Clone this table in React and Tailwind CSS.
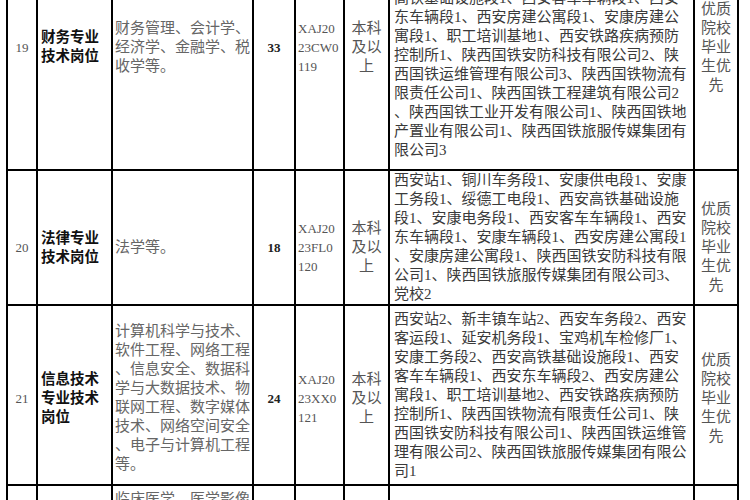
import React from 'react';

const rows = [
  {
    num: '19',
    h: 'h-[246px]',
    shift: '',
    name: ['财务专业', '技术岗位'],
    major: ['财务管理、会计学、', '经济学、金融学、税', '收学等。'],
    count: '33',
    code: ['XAJ20', '23CW0', '119'],
    units: [
      '高铁基础设施段1、西安客车车辆段1、西安',
      '东车辆段1、西安房建公寓段1、安康房建公',
      '寓段1、职工培训基地1、西安铁路疾病预防',
      '控制所1、陕西国铁安防科技有限公司2、陕',
      '西国铁运维管理有限公司3、陕西国铁物流有',
      '限责任公司1、陕西国铁工程建筑有限公司2',
      '、陕西国铁工业开发有限公司1、陕西国铁地',
      '产置业有限公司1、陕西国铁旅服传媒集团有',
      '限公司3',
    ],
    unitsBottom: true,
  },
  {
    num: '20',
    h: 'h-[135px]',
    shift: 'pt-[20px]',
    name: ['法律专业', '技术岗位'],
    major: ['法学等。'],
    count: '18',
    code: ['XAJ20', '23FL0', '120'],
    units: [
      '西安站1、铜川车务段1、安康供电段1、安康',
      '工务段1、绥德工电段1、西安高铁基础设施',
      '段1、安康电务段1、西安客车车辆段1、西安',
      '东车辆段1、安康车辆段1、西安房建公寓段1',
      '、安康房建公寓段1、陕西国铁安防科技有限',
      '公司1、陕西国铁旅服传媒集团有限公司3、',
      '党校2',
    ],
  },
  {
    num: '21',
    h: 'h-[180px]',
    shift: 'pt-[6px]',
    name: ['信息技术', '专业技术', '岗位'],
    major: [
      '计算机科学与技术、',
      '软件工程、网络工程',
      '、信息安全、数据科',
      '学与大数据技术、物',
      '联网工程、数字媒体',
      '技术、网络空间安全',
      '、电子与计算机工程',
      '等。',
    ],
    count: '24',
    code: ['XAJ20', '23XX0', '121'],
    units: [
      '西安站2、新丰镇车站2、西安车务段2、西安',
      '客运段1、延安机务段1、宝鸡机车检修厂1、',
      '安康工务段2、西安高铁基础设施段1、西安',
      '客车车辆段1、西安东车辆段2、西安房建公',
      '寓段1、职工培训基地2、西安铁路疾病预防',
      '控制所1、陕西国铁物流有限责任公司1、陕',
      '西国铁安防科技有限公司1、陕西国铁运维管',
      '理有限公司2、陕西国铁旅服传媒集团有限公',
      '司1',
    ],
  },
];

const serif = { fontFamily: '"Liberation Serif", "Noto Sans CJK SC", serif' };

function Lines({ items }) {
  return items.map((t, i) => (
    <div key={i} className="whitespace-nowrap">{t}</div>
  ));
}

export default function App() {
  const td = 'border-2 border-black p-0';
  return (
    <div className="w-[750px] h-[500px] overflow-hidden bg-white pl-[6px]" style={serif}>
      <table className="table-fixed border-collapse w-[731px] -mt-[77px] text-[15px] leading-[19px] text-[#444]">
        <colgroup>
          <col className="w-[30px]" />
          <col className="w-[75px]" />
          <col className="w-[141px]" />
          <col className="w-[42px]" />
          <col className="w-[49px]" />
          <col className="w-[45px]" />
          <col className="w-[305px]" />
          <col className="w-[44px]" />
        </colgroup>
        <tbody>
          {rows.map(r => (
            <tr key={r.num} className={r.h}>
              <td className={`${td} align-middle ${r.shift} text-center text-[13px] text-[#555]`}>{r.num}</td>
              <td className={`${td} align-middle ${r.shift} pl-[3px] font-bold text-[#111] text-[14.5px]`}>
                <Lines items={r.name} />
              </td>
              <td className={`${td} align-middle ${r.shift} pl-[2px] text-[#666]`}>
                <Lines items={r.major} />
              </td>
              <td className={`${td} align-middle ${r.shift} text-center text-[13px] font-bold text-[#222]`}>{r.count}</td>
              <td className={`${td} align-middle ${r.shift} pl-[2px] text-[13px] text-[#555]`}>
                <Lines items={r.code} />
              </td>
              <td className={`${td} align-middle ${r.shift} text-center text-[#555]`}>
                <Lines items={['本科', '及以', '上']} />
              </td>
              <td className={`${td} pl-[4px] text-[#3a3a3a] ${r.unitsBottom ? 'align-bottom pb-[9px]' : 'align-middle'}`}>
                <Lines items={r.units} />
              </td>
              <td className={`${td} align-middle ${r.shift} text-center text-[#555]`}>
                <Lines items={['优质', '院校', '毕业', '生优', '先']} />
              </td>
            </tr>
          ))}
          <tr className="h-[200px]">
            <td className={td}></td>
            <td className={td}></td>
            <td className={`${td} align-top pt-[4px] pl-[2px] text-[#666]`}>
              <Lines items={['临床医学、医学影像']} />
            </td>
            <td className={td}></td>
            <td className={td}></td>
            <td className={td}></td>
            <td className={td}></td>
            <td className={td}></td>
          </tr>
        </tbody>
      </table>
    </div>
  );
}
